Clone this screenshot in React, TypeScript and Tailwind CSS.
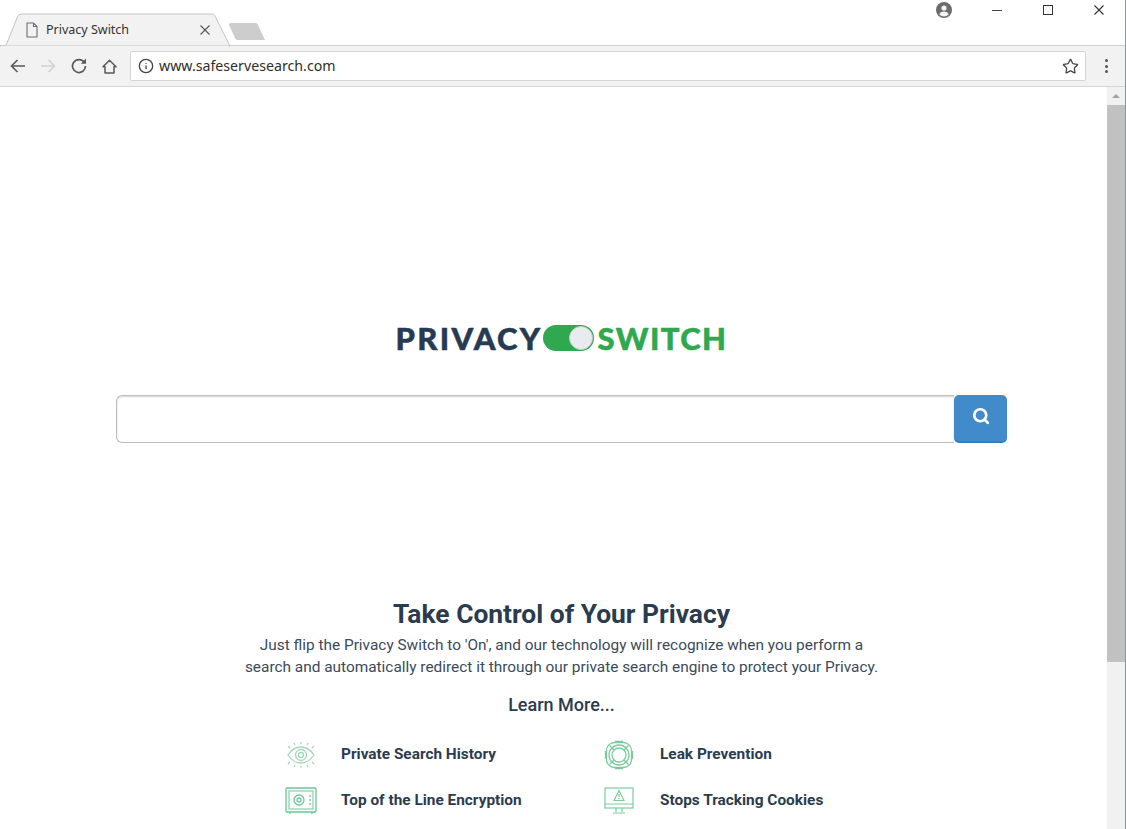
import { Info, Star, Search } from 'lucide-react';

const ProfileIcon = () => (
  <svg width="16" height="16" viewBox="0 0 16 16">
    <circle cx="8" cy="8" r="8" fill="#6b6b6b" />
    <circle cx="8" cy="6" r="2.6" fill="#f2f2f2" />
    <path d="M3.2 12.2c1-1.9 3-2.6 4.8-2.6s3.8.7 4.8 2.6A6.4 6.4 0 0 1 8 14.4a6.4 6.4 0 0 1-4.8-2.2z" fill="#f2f2f2" />
  </svg>
);

const PageIcon = () => (
  <svg width="14" height="16" viewBox="0 0 14 16" fill="none" stroke="#6e6e6e" strokeWidth="1.1">
    <path d="M2 1h6.5L12 4.5V15H2z" />
    <path d="M8.5 1v3.5H12" />
  </svg>
);

const Cross = ({ size, color }: { size: number; color: string }) => (
  <svg width={size} height={size} viewBox="0 0 10 10" fill="none" stroke={color} strokeWidth="1.100">
    <path d="M.5.5l9 9M9.500.5l-9 9" />
  </svg>
);

const BackArrow = ({ color, flip }: { color: string; flip?: boolean }) => (
  <svg className={flip ? '-scale-x-100' : ''} width="15" height="14" viewBox="0 0 15 14" fill="none" stroke={color} strokeWidth="1.700">
    <path d="M15 7H1.500M7.500 1L1.500 7l6 6" />
  </svg>
);

const ReloadIcon = () => (
  <svg width="16" height="16" viewBox="0 0 16 16" fill="none" stroke="#5a5a5a" strokeWidth="1.700">
    <path d="M13.300 4.300A6.500 6.500 0 1 0 14.500 8" />
    <path d="M15 .5v5.200H9.800z" fill="#5a5a5a" stroke="none" />
  </svg>
);

const HomeIcon = () => (
  <svg width="15" height="15" viewBox="0 0 15 15" fill="none" stroke="#5a5a5a" strokeWidth="1.500">
    <path d="M1 7.800L7.500 1.200 14 7.800h-2v6.200H3V7.800z" strokeLinejoin="round" />
  </svg>
);

const EyeIcon = () => (
  <svg width="32" height="28" viewBox="0 0 32 28" fill="none" stroke="#a5d8bb" strokeWidth="1.300">
    <path d="M3 14c4-6 8.500-8 13-8s9 2 13 8c-4 6-8.500 8-13 8s-9-2-13-8z" />
    <circle cx="16" cy="14" r="5.500" />
    <circle cx="16" cy="14" r="2.500" />
    <path d="M16 1v2M9 2l1 2M23 2l-1 2M3 5l2 2M29 5l-2 2M16 25v2M9 26l1-2M23 26l-1-2M3 23l2-2M29 23l-2-2" />
  </svg>
);

const SafeIcon = () => (
  <svg width="32" height="28" viewBox="0 0 32 28" fill="none" stroke="#6cc596" strokeWidth="1.300">
    <rect x="1" y="1" width="30" height="24" rx="1" />
    <rect x="4" y="4" width="24" height="18" stroke="#8fd3ae" />
    <circle cx="14" cy="13" r="5" />
    <circle cx="14" cy="13" r="2" />
    <path d="M25 8v2M25 12v2M25 16v2M5 25v2M27 25v2" />
  </svg>
);

const BuoyIcon = () => (
  <svg width="30" height="30" viewBox="0 0 30 30" fill="none" stroke="#7ccb9f" strokeWidth="1.300">
    <rect x="2.500" y="2.500" width="25" height="25" rx="8" />
    <circle cx="15" cy="15" r="10" />
    <circle cx="15" cy="15" r="7" />
    <path d="M10 10L5.500 5.500M20 10l4.500-4.500M10 20l-4.500 4.500M20 20l4.500 4.500" />
    <path d="M11 1.500h8M11 28.500h8M1.500 11v8M28.500 11v8" />
  </svg>
);

const MonitorIcon = () => (
  <svg width="30" height="28" viewBox="0 0 30 28" fill="none" stroke="#7ccb9f" strokeWidth="1.200">
    <rect x="1" y="1" width="28" height="20" />
    <path d="M1 17h28M12 21v4M18 21v4M9 26h12" />
    <path d="M15 3.500l5 10H10z" />
    <path d="M15 7v3M15 11v1" />
  </svg>
);

const Feature = ({ icon, label }: { icon: React.ReactNode; label: string }) => (
  <div className="flex h-[46px] items-center">
    <div className="flex w-[56px] shrink-0 justify-start">{icon}</div>
    <span className="text-[15.4px] font-bold text-[#2b3c4f]">{label}</span>
  </div>
);

export default function App() {
  return (
    <div className="flex h-[829px] w-[1126px] flex-col overflow-hidden border-r border-[#5aa5d8] bg-white font-['Roboto',sans-serif]">
      {/* title bar */}
      <div className="relative h-[46px] shrink-0 border-b border-[#d2d2d2] bg-white">
        <svg className="absolute left-0 top-0" width="270" height="47" viewBox="0 0 270 47">
          <path d="M0 46h3c2 0 3-1 4-3L17 18c1-3 2-4 5-4h190c2 0 3 1 4 4l14 28z" fill="#f2f2f2" stroke="#c4c4c4" />
          <path d="M0 46h229v1H1z" fill="#f2f2f2" />
          <path d="M232 23h23c1.500 0 2.500.5 3 2l7 15h-27c-1.500 0-2.500-.5-3-2l-6-13c-.5-1 .5-2 3-2z" fill="#cdcdcd" />
        </svg>
        <div className="absolute left-[25px] top-[22px] flex items-center">
          <PageIcon />
          <span className="ml-[7px] font-['Noto_Sans',sans-serif] text-[12.5px] leading-4 text-[#333]">Privacy Switch</span>
          <span className="ml-[71px]">
            <Cross size={10} color="#555" />
          </span>
        </div>
        <div className="absolute right-0 top-0 flex items-center pt-[2px]">
          <ProfileIcon />
          <span className="ml-[40px] h-px w-[10px] bg-[#444]" />
          <span className="ml-[41px] h-[10px] w-[10px] border border-[#333]" />
          <span className="ml-[41px] mr-[21px]">
            <Cross size={10} color="#333" />
          </span>
        </div>
      </div>

      {/* toolbar */}
      <div className="flex h-[41px] shrink-0 items-center border-b border-[#d6d6d6] bg-[#f2f2f2]">
        <div className="flex items-center pl-[10px]">
          <BackArrow color="#5a5a5a" />
          <span className="ml-[16px]">
            <BackArrow color="#d2d2d2" flip />
          </span>
          <span className="ml-[15px]">
            <ReloadIcon />
          </span>
          <span className="ml-[15px]">
            <HomeIcon />
          </span>
        </div>
        <div className="ml-[13px] flex h-[30px] w-[956px] items-center rounded-[2px] border border-[#d4d4d4] bg-white pl-[7px]">
          <Info className="text-[#444]" size={16} strokeWidth={2} />
          <span className="ml-[5px] flex-1 font-['Noto_Sans',sans-serif] text-[14.2px] text-[#2e2e2e]">www.safeservesearch.com</span>
          <Star className="mr-[6px] text-[#444]" size={17} strokeWidth={1.800} />
        </div>
        <div className="ml-[19px] flex flex-col gap-[2.500px]">
          <span className="h-[3px] w-[3px] rounded-full bg-[#555]" />
          <span className="h-[3px] w-[3px] rounded-full bg-[#555]" />
          <span className="h-[3px] w-[3px] rounded-full bg-[#555]" />
        </div>
      </div>

      <div className="flex min-h-0 flex-1">
        {/* page */}
        <main className="flex w-[1107px] shrink-0 flex-col items-center pl-[16px] pt-[235px]">
          <div className="flex h-[32px] items-center font-['Lato',sans-serif] text-[31px] font-black leading-none [-webkit-text-stroke:0.5px]">
            <span className="tracking-[2.300px] text-[#263b52]">PRIVACY</span>
            <div className="ml-[1px] flex h-[26px] w-[51px] items-center justify-end rounded-full bg-[#2fa84f] pr-[1px]">
              <span className="h-[24px] w-[24px] rounded-full border border-[#c4ccc8] bg-[#e9ecef]" />
            </div>
            <span className="ml-[3px] tracking-[1.400px] text-[#2fa84f]">SWITCH</span>
          </div>

          <div className="mt-[41px] flex h-[48px] w-[891px]">
            <div className="flex-1 rounded-l-[6px] border border-r-0 border-[#bdbdbd] bg-white shadow-[inset_0_1px_2px_rgba(0,0,0,0.18)]" />
            <div className="flex w-[53px] items-center justify-center rounded-[5px] border-b-2 border-[#357ebd] bg-[#428bca] pb-[4px]">
              <Search className="text-white" size={18} strokeWidth={3.600} />
            </div>
          </div>

          <h1 className="mt-[154px] text-[26.4px] font-bold leading-[34px] text-[#2b3c4f]">Take Control of Your Privacy</h1>
          <p className="mt-[3px] text-center text-[15.4px] leading-[22px] text-[#3b4a5a]">
            Just flip the Privacy Switch to 'On', and our technology will recognize when you perform a
            <br />
            search and automatically redirect it through our private search engine to protect your Privacy.
          </p>
          <div className="mt-[15px] text-[18px] font-medium leading-6 text-[#2b3c4f]">Learn More...</div>

          <div className="mt-[15px] grid w-[560px] grid-cols-[319px_1fr] pl-[3.500px]">
            <Feature icon={<EyeIcon />} label="Private Search History" />
            <Feature icon={<BuoyIcon />} label="Leak Prevention" />
            <Feature icon={<SafeIcon />} label="Top of the Line Encryption" />
            <Feature icon={<MonitorIcon />} label="Stops Tracking Cookies" />
          </div>
        </main>

        {/* scrollbar */}
        <div className="flex w-[18px] shrink-0 flex-col bg-[#f1f1f1]">
          <div className="flex h-[18px] items-center justify-center">
            <span className="h-0 w-0 border-x-[4px] border-b-[4px] border-x-transparent border-b-[#a3a3a3]" />
          </div>
          <div className="h-[557px] bg-[#c1c1c1]" />
        </div>
      </div>
    </div>
  );
}
